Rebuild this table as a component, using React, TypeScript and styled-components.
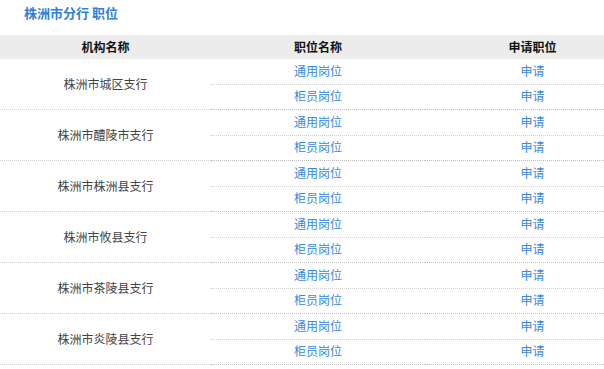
import React from 'react';
import styled, { createGlobalStyle } from 'styled-components';

const GlobalStyle = createGlobalStyle`
  html, body {
    margin: 0;
    padding: 0;
    background: #ffffff;
    overflow: hidden;
  }
  body {
    font-family: "Noto Sans CJK SC", "Noto Sans", sans-serif;
    font-size: 12px;
    color: #333333;
  }
`;

const Page = styled.div`
  width: 604px;
  overflow: hidden;
`;

const Table = styled.div`
  width: 640px;
`;

const Title = styled.h2`
  margin: 0;
  padding: 4px 0 0 24px;
  height: 35px;
  box-sizing: border-box;
  font-size: 13px;
  line-height: 18px;
  font-weight: bold;
  color: #2f80d9;
`;

const HeaderRow = styled.div`
  display: grid;
  grid-template-columns: 211px 214px 215px;
  height: 24px;
  background: #ececec;
`;

const HeaderCell = styled.div`
  text-align: center;
  line-height: 24px;
  font-weight: bold;
  color: #111111;
`;

const Group = styled.div`
  display: grid;
  grid-template-columns: 211px 214px 215px;
  grid-template-rows: 25.5px 25.5px;
`;

const BranchCell = styled.div`
  grid-row: span 2;
  display: flex;
  align-items: center;
  justify-content: center;
  padding-bottom: 1px;
  border-bottom: 1px dotted #d4d4d4;
  color: #444444;
`;

const LinkCell = styled.div<{ $last?: boolean }>`
  display: flex;
  align-items: center;
  justify-content: center;
  box-sizing: border-box;
  padding-bottom: 2px;
  border-bottom: 1px dotted ${p => (p.$last ? '#bdbdbd' : '#cfcfcf')};
`;

const Link = styled.a`
  color: #3688e2;
  text-decoration: none;
`;

const branches = [
  '株洲市城区支行',
  '株洲市醴陵市支行',
  '株洲市株洲县支行',
  '株洲市攸县支行',
  '株洲市茶陵县支行',
  '株洲市炎陵县支行',
];

const positions = ['通用岗位', '柜员岗位'];

export default function App() {
  return (
    <Page>
      <GlobalStyle />
      <Title>株洲市分行 职位</Title>
      <Table>
        <HeaderRow>
          <HeaderCell>机构名称</HeaderCell>
          <HeaderCell>职位名称</HeaderCell>
          <HeaderCell>申请职位</HeaderCell>
        </HeaderRow>
        {branches.map(branch => (
          <Group key={branch}>
            <BranchCell>{branch}</BranchCell>
            {positions.map((pos, i) => (
              <React.Fragment key={pos}>
                <LinkCell $last={i === 1}>
                  <Link href="#">{pos}</Link>
                </LinkCell>
                <LinkCell $last={i === 1}>
                  <Link href="#">申请</Link>
                </LinkCell>
              </React.Fragment>
            ))}
          </Group>
        ))}
      </Table>
    </Page>
  );
}
